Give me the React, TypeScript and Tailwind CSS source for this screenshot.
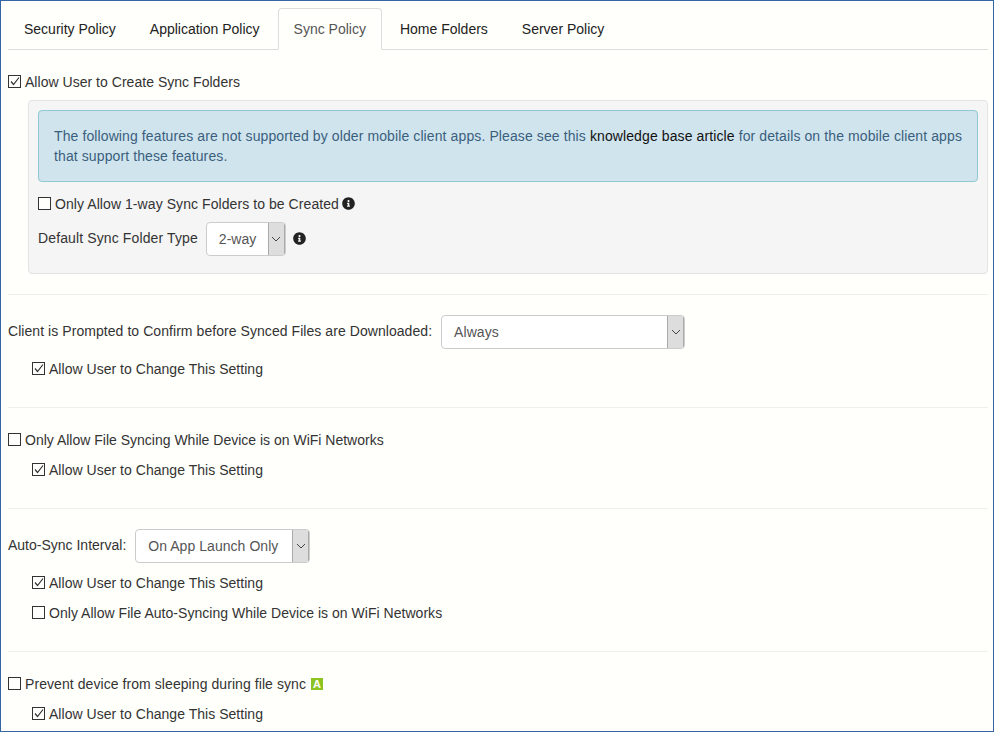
import { FaInfoCircle } from 'react-icons/fa'

const tabs = ['Security Policy', 'Application Policy', 'Sync Policy', 'Home Folders', 'Server Policy']

const Check = ({
  label,
  checked,
  className = '',
  tracking = 'tracking-[0.03px]',
}: {
  label: string
  checked?: boolean
  className?: string
  tracking?: string
}) => (
  <label className={`flex items-center gap-[4px] h-[20px] ${className}`}>
    <span className="relative -top-[1px] w-[13px] h-[13px] border border-[#333] bg-[#fffffb] shrink-0 flex items-center justify-center">
      {checked && (
        <svg width="11" height="11" viewBox="0 0 11 11" fill="none" stroke="#333" strokeWidth="1.2">
          <path d="M2 5.5 L4.5 8.5 L10 1.5" />
        </svg>
      )}
    </span>
    <span className={tracking}>{label}</span>
  </label>
)

const Select = ({ value, width }: { value: string; width: string }) => (
  <div className={`${width} h-[34px] flex bg-white border border-[#ccc] rounded-[4px] overflow-hidden text-[#555]`}>
    <span className="flex-1 pl-[12px] leading-[32px] tracking-[0.05px]">{value}</span>
    <span className="w-[17px] bg-[#ddd] border-l border-r border-[#aaa] flex items-center justify-center">
      <svg width="10" height="6" viewBox="0 0 10 6" fill="none" stroke="#444" strokeWidth="1">
        <path d="M1 1 L5 5 L9 1" />
      </svg>
    </span>
  </div>
)

const Divider = ({ className = '' }: { className?: string }) => <div className={`h-px bg-[#eeeeea] ${className}`} />

export default function App() {
  return (
    <div
      className="w-[994px] h-[732px] border border-[#3465a4] overflow-hidden bg-[#fffffb] pl-[7px] pr-[5px] text-[14px] text-[#333]"
      style={{ fontFamily: '"Liberation Sans", Arial, sans-serif' }}
    >
      {/* Tabs */}
      <div className="mt-[7px] h-[42px] border-b border-[#ddd] flex gap-[2px]">
        {tabs.map((tab) => (
          <div
            key={tab}
            className={
              tab === 'Sync Policy'
                ? 'h-[42px] px-[15px] border border-[#ddd] border-b-[#fffffb] rounded-t-[4px] bg-[#fffffb] text-[#555] leading-[40px]'
                : 'h-[41px] px-[16px] text-[#222] leading-[42px]'
            }
          >
            {tab}
          </div>
        ))}
      </div>

      {/* Create sync folders */}
      <Check className="mt-[22px]" label="Allow User to Create Sync Folders" checked />
      <div className="mt-[8px] ml-[20px] h-[174px] border border-[#e3e3e3] rounded-[4px] bg-[#f5f5f5] p-[9px]">
        <div className="h-[72px] border border-[#8ec8d2] rounded-[4px] bg-[#d0e4ee] pl-[15px] pr-[6px] py-[15px] leading-[20px] text-[#3a5f7d] tracking-[0.105px]">
          The following features are not supported by older mobile client apps. Please see this{' '}
          <a className="text-[#111]">knowledge base article</a> for details on the mobile client apps
          <br />
          that support these features.
        </div>
        <div className="mt-[12px] flex items-center gap-[3px]">
          <Check label="Only Allow 1-way Sync Folders to be Created" tracking="tracking-[0.07px]" />
          <FaInfoCircle className="relative -top-[1px] w-[13px] h-[13px] text-[#222]" />
        </div>
        <div className="mt-[8px] flex items-center">
          <span className="relative -top-[1px] tracking-[0.12px]">Default Sync Folder Type</span>
          <div className="ml-[8px]">
            <Select value="2-way" width="w-[80px]" />
          </div>
          <FaInfoCircle className="relative -top-[1px] ml-[7px] w-[13px] h-[13px] text-[#222]" />
        </div>
      </div>
      <Divider className="mt-[20px]" />

      {/* Download prompt */}
      <div className="mt-[20px] flex items-center h-[34px]">
        <span className="relative -top-[1px] tracking-[0.06px]">
          Client is Prompted to Confirm before Synced Files are Downloaded:
        </span>
        <div className="ml-[9px]">
          <Select value="Always" width="w-[244px]" />
        </div>
      </div>
      <Check className="mt-[10px] ml-[24px]" label="Allow User to Change This Setting" checked />
      <Divider className="mt-[28px]" />

      {/* WiFi only */}
      <Check className="mt-[22px]" label="Only Allow File Syncing While Device is on WiFi Networks" tracking="tracking-normal" />
      <Check className="mt-[10px] ml-[24px]" label="Allow User to Change This Setting" checked />
      <Divider className="mt-[28px]" />

      {/* Auto-sync */}
      <div className="mt-[20px] flex items-center h-[34px]">
        <span className="relative -top-[1px]">Auto-Sync Interval:</span>
        <div className="ml-[9px]">
          <Select value="On App Launch Only" width="w-[175px]" />
        </div>
      </div>
      <Check className="mt-[10px] ml-[24px]" label="Allow User to Change This Setting" checked />
      <Check className="mt-[10px] ml-[24px]" label="Only Allow File Auto-Syncing While Device is on WiFi Networks" />
      <Divider className="mt-[28px]" />

      {/* Sleep */}
      <div className="mt-[22px] flex items-center gap-[5px]">
        <Check label="Prevent device from sleeping during file sync" tracking="tracking-[0.07px]" />
        <span className="w-[12px] h-[12px] bg-[#8fc31f] text-white text-[11px] font-bold leading-[12px] text-center">A</span>
      </div>
      <Check className="mt-[10px] ml-[24px]" label="Allow User to Change This Setting" checked />
    </div>
  )
}
